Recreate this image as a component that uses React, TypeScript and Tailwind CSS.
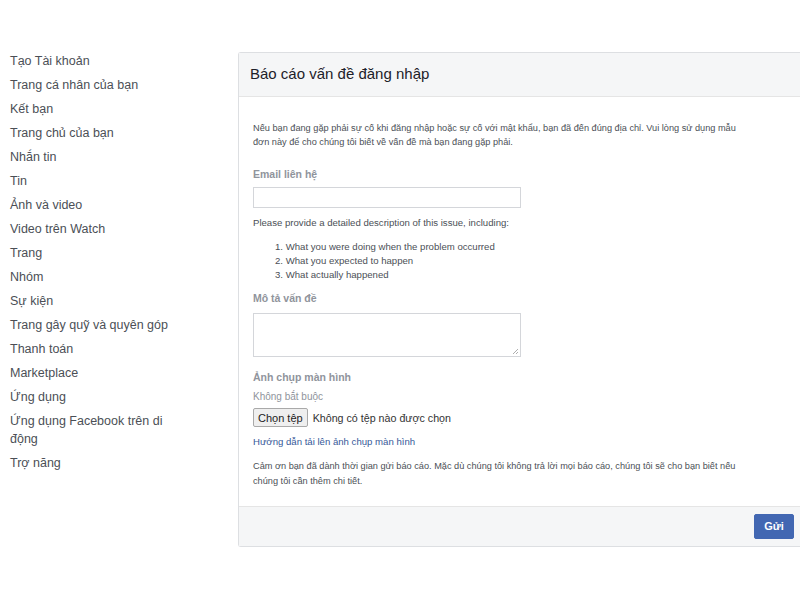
const menuItems: string[] = [
  "Tạo Tài khoản",
  "Trang cá nhân của bạn",
  "Kết bạn",
  "Trang chủ của bạn",
  "Nhắn tin",
  "Tin",
  "Ảnh và video",
  "Video trên Watch",
  "Trang",
  "Nhóm",
  "Sự kiện",
  "Trang gây quỹ và quyên góp",
  "Thanh toán",
  "Marketplace",
  "Ứng dụng",
  "Ứng dụng Facebook trên di động",
  "Trợ năng",
];

const steps: string[] = [
  "What you were doing when the problem occurred",
  "What you expected to happen",
  "What actually happened",
];

export default function App() {
  return (
    <div className="flex w-[800px] h-[600px] bg-white font-['Liberation_Sans',Arial,sans-serif] overflow-hidden">
      <nav className="w-[238px] shrink-0 pl-[10px] pt-[52px]">
        <ul className="w-[170px]">
          {menuItems.map((item, i) => (
            <li key={i} className="text-[12.5px] leading-[18px] text-[#4b4f56] mb-[6px]">
              {item}
            </li>
          ))}
        </ul>
      </nav>

      <div className="flex-1 pt-[52px]">
        <div className="border border-[#dddfe2] border-r-0 rounded-l-[3px] w-[562px]">
          <div className="bg-[#f5f6f7] border-b border-[#e5e5e5] h-[44px] flex items-center pl-[11px]">
            <h2 className="text-[15px] text-[#1d2129]">Báo cáo vấn đề đăng nhập</h2>
          </div>

          <div className="bg-white pl-[14px] pr-[40px] pt-[24px] pb-[17px]">
            <p className="max-w-[488px] text-[9.2px] leading-[14px] text-[#4b4f56]">
              Nếu bạn đang gặp phải sự cố khi đăng nhập hoặc sự cố với mật khẩu, bạn đã đến đúng địa chỉ. Vui lòng sử dụng mẫu đơn này để cho chúng tôi biết về vấn đề mà bạn đang gặp phải.
            </p>

            <div className="mt-[18px] text-[10.5px] font-bold text-[#90949c]">Email liên hệ</div>
            <div className="mt-[4px] w-[268px] h-[21px] border border-[#d4d6da] bg-white" />

            <p className="mt-[8px] text-[9.6px] leading-[14px] text-[#4b4f56]">
              Please provide a detailed description of this issue, including:
            </p>
            <ol className="mt-[10px] pl-[22px] text-[9.6px] leading-[14px] text-[#4b4f56]">
              {steps.map((s, i) => (
                <li key={i}>
                  {i + 1}. {s}
                </li>
              ))}
            </ol>

            <div className="mt-[9px] text-[10.5px] font-bold text-[#90949c]">Mô tả vấn đề</div>
            <div className="mt-[6px] w-[268px] h-[44px] border border-[#d4d6da] bg-white relative">
              <svg className="absolute right-[1px] bottom-[1px]" width="7" height="7" viewBox="0 0 7 7">
                <path d="M6 1 L1 6 M6 4 L4 6" stroke="#9a9a9a" strokeWidth="0.8" />
              </svg>
            </div>

            <div className="mt-[13px] text-[10.5px] font-bold text-[#90949c]">Ảnh chụp màn hình</div>
            <div className="mt-[4px] text-[10px] text-[#90949c]">Không bắt buộc</div>
            <div className="mt-[4px] flex items-center gap-[5px]">
              <span className="h-[19px] px-[4px] flex items-center border border-[#a9a9a9] rounded-[2px] bg-[#efefef] text-[11px] text-[#222]">
                Chọn tệp
              </span>
              <span className="text-[10.7px] text-[#333]">Không có tệp nào được chọn</span>
            </div>
            <div className="mt-[8px] text-[9.6px] text-[#365899]">Hướng dẫn tải lên ảnh chụp màn hình</div>

            <p className="mt-[9px] max-w-[488px] text-[9.2px] leading-[15px] text-[#4b4f56]">
              Cảm ơn bạn đã dành thời gian gửi báo cáo. Mặc dù chúng tôi không trả lời mọi báo cáo, chúng tôi sẽ cho bạn biết nếu chúng tôi cần thêm chi tiết.
            </p>
          </div>

          <div className="bg-[#f5f6f7] border-t border-[#e5e5e5] h-[40px] flex items-center justify-end pr-[6px]">
            <span className="w-[40px] h-[25px] flex items-center justify-center bg-[#4267b2] border border-[#4267b2] rounded-[2px] text-white text-[11px] font-bold">
              Gửi
            </span>
          </div>
        </div>
      </div>
    </div>
  );
}
